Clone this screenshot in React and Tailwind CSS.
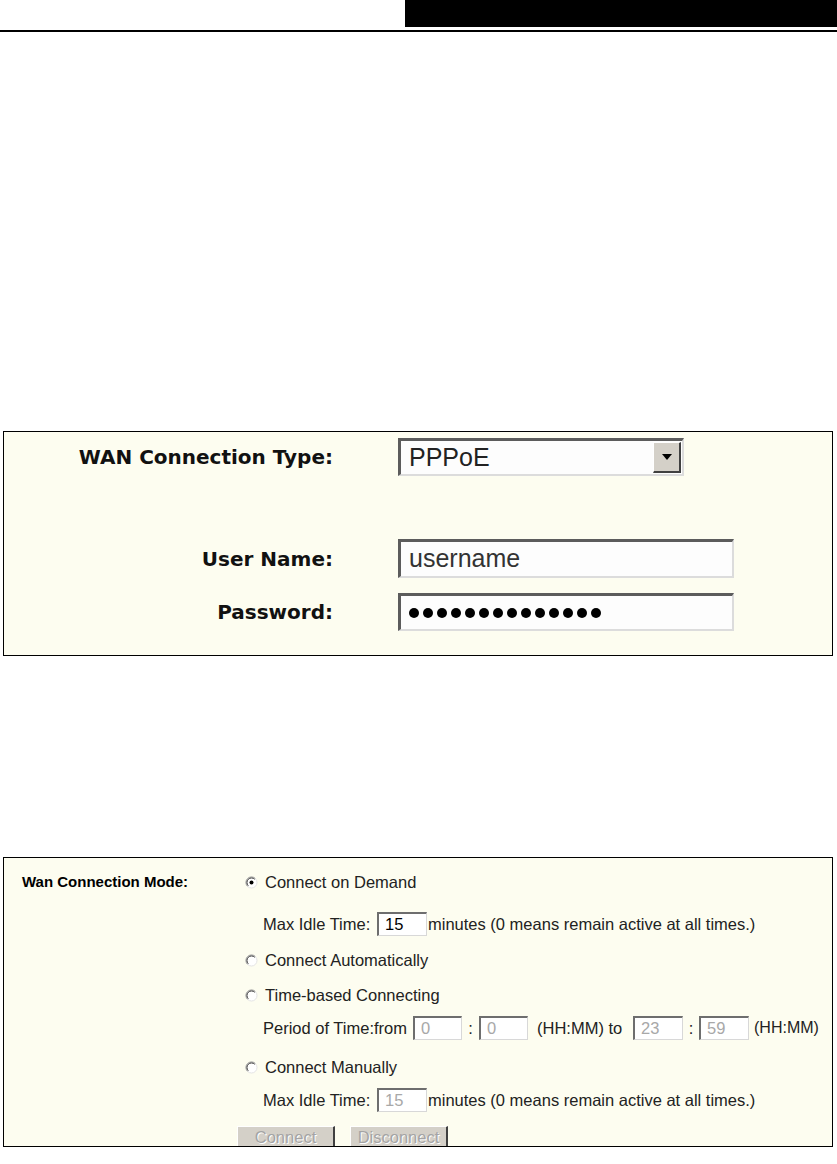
const sans = "font-['Liberation_Sans',Arial,sans-serif]";
const wide = "font-['DejaVu_Sans',Verdana,sans-serif]";

function Radio({ checked }) {
  return (
    <svg width="13" height="13" viewBox="0 0 13 13" className="shrink-0">
      <circle cx="6.5" cy="6.5" r="5.5" fill="#ffffff" />
      <path d="M2.6 10.4 A5.5 5.5 0 0 1 10.4 2.6" fill="none" stroke="#8a8a8a" strokeWidth="1" />
      <path d="M10.4 2.6 A5.5 5.5 0 0 1 2.6 10.4" fill="none" stroke="#e4e4e4" strokeWidth="1" />
      <path d="M3.3 9.7 A4.5 4.5 0 0 1 9.7 3.3" fill="none" stroke="#404040" strokeWidth="1" />
      {checked && <circle cx="6.5" cy="6.5" r="2" fill="#000000" />}
    </svg>
  );
}

function SmallInput({ value, width = 'w-[50px]', disabled }) {
  return (
    <div
      className={`${width} h-[24px] shrink-0 flex items-center pl-[6px] bg-white border-t-2 border-l-2 border-b border-r border-t-[#6e6e6e] border-l-[#6e6e6e] border-b-[#d8d8d8] border-r-[#d8d8d8] ${disabled ? 'text-[#a8a8a8]' : 'text-black'}`}
    >
      {value}
    </div>
  );
}

function BigInput({ children, height }) {
  return (
    <div
      className={`w-[336px] ${height} flex items-center pl-[8px] bg-[#fdfdfd] border-t-[3px] border-l-[3px] border-b-2 border-r-2 border-t-[#5c5c5c] border-l-[#5c5c5c] border-b-[#dcdcdc] border-r-[#dcdcdc]`}
    >
      {children}
    </div>
  );
}

function DisabledButton({ children }) {
  return (
    <div className="w-[98px] h-[20px] flex items-center justify-center leading-[18px] bg-[#d4d0c8] border-t border-l border-t-white border-l-white border-r-2 border-r-[#404040] text-[#a4a4a4] [text-shadow:1px_1px_0_#ffffff]">
      {children}
    </div>
  );
}

export default function App() {
  return (
    <div className={`w-[837px] h-[1164px] bg-white overflow-hidden ${sans}`}>
      {/* Header */}
      <div className="flex justify-end">
        <div className="w-[432px] h-[27px] bg-black" />
      </div>
      <div className="mt-[3px] h-[2px] bg-black" />

      {/* WAN type box */}
      <div className="mt-[399px] ml-[3px] w-[830px] h-[225px] border border-black bg-[#fdfdf0] pt-[6px]">
        <div className="flex items-center">
          <div className={`w-[329px] text-right font-bold text-[20px] text-[#111] ${wide}`}>WAN Connection Type:</div>
          <div className="ml-[65px] w-[286px] h-[38px] flex items-center bg-[#fdfdfd] border-t-[3px] border-l-[3px] border-b-2 border-r-2 border-t-[#5c5c5c] border-l-[#5c5c5c] border-b-[#dcdcdc] border-r-[#dcdcdc]">
            <span className="flex-1 pl-[8px] text-[25px] text-[#222]">PPPoE</span>
            <div className="w-[28px] h-[31px] mr-[1px] flex items-center justify-center bg-[#d4d0c8] border-t border-l border-t-white border-l-white border-b-2 border-r-2 border-b-[#404040] border-r-[#404040]">
              <svg width="10" height="6" viewBox="0 0 10 6">
                <path d="M0 0 H10 L5 6 Z" fill="#000" />
              </svg>
            </div>
          </div>
        </div>

        <div className="mt-[63px] flex items-center">
          <div className={`w-[329px] text-right font-bold text-[20px] text-[#111] ${wide}`}>User Name:</div>
          <div className="ml-[65px]">
            <BigInput height="h-[39px]">
              <span className="text-[25px] text-[#333]">username</span>
            </BigInput>
          </div>
        </div>

        <div className="mt-[15px] flex items-center">
          <div className={`w-[329px] text-right font-bold text-[20px] text-[#111] ${wide}`}>Password:</div>
          <div className="ml-[65px]">
            <BigInput height="h-[38px]">
              <div className="flex gap-[4px]">
                {Array.from({ length: 14 }).map((_, i) => (
                  <span key={i} className="w-[10px] h-[10px] rounded-full bg-black" />
                ))}
              </div>
            </BigInput>
          </div>
        </div>
      </div>

      {/* WAN mode box */}
      <div className="mt-[201px] ml-[3px] w-[830px] h-[290px] border border-black bg-[#fdfdf0] flex text-[16.5px] text-[#222] whitespace-nowrap">
        <div className="w-[241px] pl-[18px] pt-[12px]">
          <div className="h-[24px] flex items-center font-bold text-[15px] text-black">Wan Connection Mode:</div>
        </div>

        <div className="flex flex-col pt-[12px]">
          <div className="h-[24px] flex items-center gap-[7px]">
            <Radio checked />
            <span>Connect on Demand</span>
          </div>

          <div className="mt-[18px] h-[24px] flex items-center pl-[18px]">
            <span className="w-[114px] shrink-0">Max Idle Time:</span>
            <SmallInput value="15" />
            <span className="ml-[1px]">minutes (0 means remain active at all times.)</span>
          </div>

          <div className="mt-[12px] h-[24px] flex items-center gap-[7px]">
            <Radio />
            <span>Connect Automatically</span>
          </div>

          <div className="mt-[11px] h-[24px] flex items-center gap-[7px]">
            <Radio />
            <span>Time-based Connecting</span>
          </div>

          <div className="mt-[9px] h-[24px] flex items-center pl-[18px]">
            <span className="w-[150px] shrink-0">Period of Time:from</span>
            <SmallInput value="0" width="w-[49px]" disabled />
            <span className="w-[17px] text-center">:</span>
            <SmallInput value="0" width="w-[49px]" disabled />
            <span className="w-[105px] pl-[9px]">(HH:MM) to</span>
            <SmallInput value="23" width="w-[50px]" disabled />
            <span className="w-[16px] text-center">:</span>
            <SmallInput value="59" width="w-[50px]" disabled />
            <span className="pl-[5px] text-[16px]">(HH:MM)</span>
          </div>

          <div className="mt-[15px] h-[24px] flex items-center gap-[7px]">
            <Radio />
            <span>Connect Manually</span>
          </div>

          <div className="mt-[9px] h-[24px] flex items-center pl-[18px]">
            <span className="w-[114px] shrink-0">Max Idle Time:</span>
            <SmallInput value="15" disabled />
            <span className="ml-[1px]">minutes (0 means remain active at all times.)</span>
          </div>

          <div className="mt-[14px] -ml-[8px] flex gap-[15px]">
            <DisabledButton>Connect</DisabledButton>
            <DisabledButton>Disconnect</DisabledButton>
          </div>
        </div>
      </div>
    </div>
  );
}
